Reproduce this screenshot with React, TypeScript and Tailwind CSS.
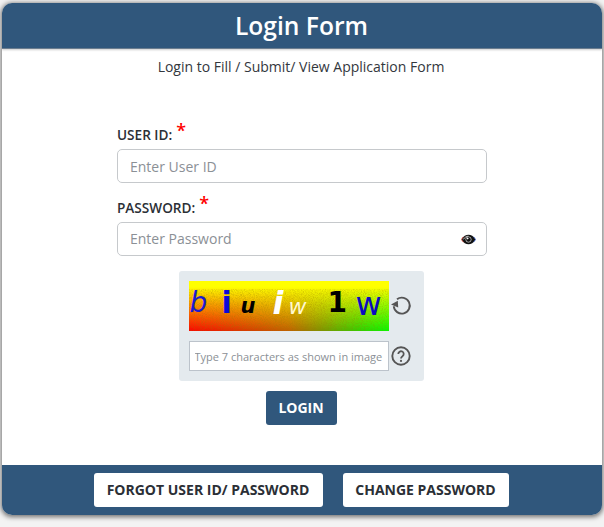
import React from "react";

const RefreshIcon = () => (
  <svg width="22" height="22" viewBox="0 0 22 22" fill="none" className="text-[#555]">
    <path d="M7 4.200A8 8 0 1 1 3.800 11.200" stroke="currentColor" strokeWidth="1.900" />
    <path d="M1 9.600 L7.800 5.800 L8.200 12.400 Z" fill="currentColor" />
  </svg>
);

const HelpIcon = () => (
  <svg width="20" height="20" viewBox="0 0 20 20" fill="none" className="text-[#555]">
    <circle cx="10" cy="10" r="8.700" stroke="currentColor" strokeWidth="1.900" />
    <path d="M7.300 8a2.700 2.700 0 1 1 4.200 2.200c-1 .7-1.500 1.100-1.500 2.200" stroke="currentColor" strokeWidth="1.800" />
    <circle cx="10" cy="14.900" r="1.100" fill="currentColor" />
  </svg>
);

const EyeIcon = () => (
  <svg width="15" height="11" viewBox="0 0 15 11">
    <path d="M.5 5.500C2.500 2 5 .8 7.500.8s5 1.200 7 4.700c-2 3.500-4.500 4.700-7 4.700s-5-1.200-7-4.700Z" fill="#111" />
    <path d="M.4 5.500C1 4.400 1.800 3.500 2.600 2.800M.4 5.500C1 6.600 1.800 7.500 2.600 8.200" stroke="#e03020" strokeWidth=".7" fill="none" />
    <path d="M14.600 5.500C14 4.400 13.200 3.500 12.400 2.800M14.600 5.500C14 6.600 13.200 7.500 12.400 8.200" stroke="#2050d0" strokeWidth=".7" fill="none" />
    <path d="M2.200 5.500C3.700 3.300 5.500 2.200 7.500 2.200" stroke="#fff" strokeWidth=".7" fill="none" />
    <circle cx="7.500" cy="5.500" r="2.700" fill="#111" stroke="#fff" strokeWidth=".6" />
    <circle cx="6.700" cy="4.600" r=".8" fill="#fff" />
  </svg>
);

const Noise = () => (
  <svg className="absolute inset-0 w-full h-full" aria-hidden="true">
    <filter id="grain">
      <feTurbulence type="fractalNoise" baseFrequency="1.100" numOctaves="2" seed="4" />
      <feColorMatrix values="0 0 0 0 0.3  0 0 0 0 0.2  0 0 0 0 0  1.600 0 0 0 -0.600" />
    </filter>
    <rect y="12" width="100%" height="38" filter="url(#grain)" opacity="0.45" />
  </svg>
);

const Captcha = () => (
  <div className="relative w-[200px] h-[50px] overflow-hidden bg-[linear-gradient(to_bottom,#ffff00_0%,#ffff00_12%,rgba(255,255,0,0.6)_45%,rgba(255,255,0,0)_100%),linear-gradient(to_right,#ff0000_0%,#c06000_50%,#30d000_85%,#00ff00_100%)]">
    <Noise />
    <div className="absolute inset-0 font-['DejaVu_Sans',sans-serif]">
      <span className="absolute left-[1px] top-0 text-[28px] leading-[44px] italic text-[#1a1ad0]">b</span>
      <span className="absolute left-[33px] top-0 text-[30px] leading-[44px] font-bold text-[#0a0ad8]">i</span>
      <span className="absolute left-[52px] top-[5px] text-[21px] leading-[40px] font-bold italic text-black">u</span>
      <span className="absolute left-[84px] top-0 text-[32px] leading-[44px] font-bold italic text-white">i</span>
      <span className="absolute left-[100px] top-[6px] text-[22px] leading-[40px] italic text-[#fff8d0]">w</span>
      <span className="absolute left-[139px] top-0 text-[28px] leading-[44px] font-bold text-black">1</span>
      <span className="absolute left-[167px] top-[2px] text-[32px] leading-[42px] text-[#0a0ac0]">w</span>
    </div>
  </div>
);

export default function App() {
  return (
    <div className="w-[604px] h-[527px] pt-[3px] px-[2px] bg-[#f3f3f3] font-['Open_Sans',sans-serif]">
      <div className="w-[600px] h-[512px] flex flex-col rounded-[10px] overflow-hidden bg-white shadow-[0_1px_5px_1px_rgba(0,0,0,0.55)]">
        <div className="relative h-[46px] shrink-0 flex items-center justify-center bg-[#30577c] border-b border-[#6b7d8f] shadow-[0_1px_2px_rgba(0,0,0,0.2)] text-white text-[24.600px] font-semibold pr-[1px] pt-[1px]">
          Login Form
        </div>

        <div className="flex-1 flex flex-col items-center pr-[2px]">
          <p className="mt-[8px] text-center text-[14px] leading-[20px] text-[#33373d]">
            Login to Fill / Submit/ View Application Form
          </p>

          <div className="w-[370px] mt-[45px] ml-[2px]">
            <label className="block h-[27px] text-[13.600px] leading-[25px] font-semibold text-[#2b2f36]">
              USER ID:<span className="relative -top-[3px] ml-[4px] text-[18px] leading-none text-[#f00]">*</span>
            </label>
            <input
              placeholder="Enter User ID"
              className="block w-full h-[34px] px-3 rounded-[5px] border border-[#c6c9cc] bg-white text-[14px] placeholder:text-[#8b9096] outline-none"
            />
            <label className="block h-[27px] mt-[12px] text-[13.600px] leading-[25px] font-semibold text-[#2b2f36]">
              PASSWORD:<span className="relative -top-[3px] ml-[4px] text-[18px] leading-none text-[#f00]">*</span>
            </label>
            <div className="relative">
              <input
                placeholder="Enter Password"
                className="block w-full h-[34px] px-3 pb-[2px] rounded-[5px] border border-[#c6c9cc] bg-white text-[14px] placeholder:text-[#8b9096] outline-none"
              />
              <span className="absolute right-[11px] top-[12px] flex">
                <EyeIcon />
              </span>
            </div>
          </div>

          <div className="mt-[15px] w-[245px] h-[110px] p-[10px] rounded-[3px] bg-[#e4eaee]">
            <div className="flex items-center">
              <Captcha />
              <span className="ml-[1px] flex">
                <RefreshIcon />
              </span>
            </div>
            <div className="mt-[10px] flex items-center">
              <input
                placeholder="Type 7 characters as shown in image"
                className="w-[200px] h-[30px] px-[5px] border border-[#bcc3cb] bg-white text-[11px] placeholder:text-[#8b9096] outline-none"
              />
              <span className="ml-[2px] flex">
                <HelpIcon />
              </span>
            </div>
          </div>

          <button className="mt-[10px] w-[71px] h-[34px] pb-[2px] rounded-[3px] bg-[#30577c] text-white text-[14px] font-bold">
            LOGIN
          </button>
        </div>

        <div className="h-[50px] shrink-0 flex items-center justify-center gap-[20px] bg-[#30577c] pr-[2px]">
          <button className="w-[229px] h-[34px] pb-[2px] rounded-[3px] bg-white text-[14px] font-bold text-[#2b2f36]">
            FORGOT USER ID/ PASSWORD
          </button>
          <button className="w-[166px] h-[34px] pb-[2px] rounded-[3px] bg-white text-[14px] font-bold text-[#2b2f36]">
            CHANGE PASSWORD
          </button>
        </div>
      </div>
    </div>
  );
}
